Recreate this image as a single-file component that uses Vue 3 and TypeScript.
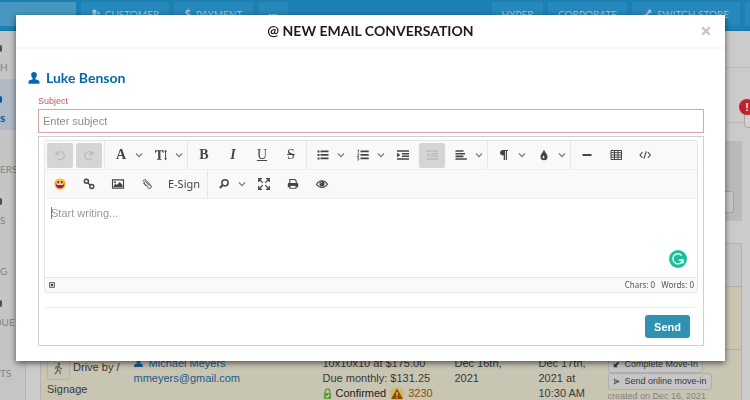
<script setup lang="ts">
import { ref } from 'vue'

interface Tool {
  id: string
  label: string
  glyph?: string
  menu?: boolean
  disabled?: boolean
}

const subject = ref('')
const message = ref('')

const firstRow: Tool[][] = [
  [
    { id: 'undo', label: 'Undo', disabled: true },
    { id: 'redo', label: 'Redo', disabled: true },
  ],
  [
    { id: 'font', label: 'Font', glyph: 'A', menu: true },
    { id: 'size', label: 'Font size', menu: true },
  ],
  [
    { id: 'bold', label: 'Bold', glyph: 'B' },
    { id: 'italic', label: 'Italic', glyph: 'I' },
    { id: 'underline', label: 'Underline', glyph: 'U' },
    { id: 'strike', label: 'Strikethrough', glyph: 'S' },
  ],
  [
    { id: 'ul', label: 'Bulleted list', menu: true },
    { id: 'ol', label: 'Numbered list', menu: true },
    { id: 'indent', label: 'Indent' },
    { id: 'outdent', label: 'Outdent', disabled: true },
    { id: 'align', label: 'Align', menu: true },
  ],
  [
    { id: 'paragraph', label: 'Paragraph', menu: true },
    { id: 'colour', label: 'Colour', menu: true },
  ],
  [
    { id: 'rule', label: 'Horizontal line' },
    { id: 'table', label: 'Table' },
    { id: 'code', label: 'Source' },
  ],
]

const secondRow: Tool[][] = [
  [
    { id: 'emoji', label: 'Emoji' },
    { id: 'link', label: 'Link' },
    { id: 'image', label: 'Image' },
    { id: 'clip', label: 'Attach file' },
    { id: 'esign', label: 'E-Sign', glyph: 'E-Sign' },
  ],
  [
    { id: 'find', label: 'Find', menu: true },
    { id: 'full', label: 'Full size' },
    { id: 'print', label: 'Print' },
    { id: 'preview', label: 'Preview' },
  ],
]

const rows = [firstRow, secondRow]

const icons: Record<string, string> = {
  undo: '<path d="M4.300 4v3.400h3.400M4.600 7.200A4 4 0 1 1 5.600 11.600" fill="none" stroke="currentColor" stroke-width="1.400"/>',
  redo: '<path d="M11.700 4v3.400H8.300M11.400 7.200A4 4 0 1 0 10.400 11.600" fill="none" stroke="currentColor" stroke-width="1.400"/>',
  size: '<path d="M2 3.200h8.600v2.700H10c-.2-1.200-.6-1.700-1.700-1.700h-.9v7.100c0 .6.400.8 1.300.9v.6H3.900v-.6c.9-.1 1.300-.3 1.300-.9V4.200h-.9c-1 0-1.500.5-1.700 1.700H2z"/><path d="M12.600 2.800l1.500 2h-1v6.400h1l-1.500 2-1.500-2h1V4.800h-1z"/>',
  ul: '<path d="M2.500 3.500h2v2h-2zM2.500 7h2v2h-2zM2.500 10.500h2v2h-2zM5.500 3.500h8v1.700h-8zM5.500 7h8v1.700h-8zM5.500 10.500h8v1.700h-8z"/>',
  ol: '<path d="M5.500 3.500h8.200v1.700H5.500zM5.500 7h8.200v1.700H5.500zM5.500 10.500h8.200v1.700H5.500z"/><path d="M2.600 3.500l.9-.6v3M2.300 7h1.500v1l-1.500 1.500h1.700M2.300 10.800h1.500l-.8.9c1.300 0 1.200 1.700-.8 1.300" fill="none" stroke="currentColor" stroke-width=".8"/>',
  indent: '<path d="M2 3.200h12v1.500H2zM7 5.900h7v1.500H7zM7 8.600h7v1.500H7zM2 11.300h12v1.500H2zM2 5.700l3.500 2.300L2 10.300z"/>',
  outdent: '<path d="M2 3.200h12v1.500H2zM7 5.900h7v1.500H7zM7 8.600h7v1.500H7zM2 11.300h12v1.500H2zM5.500 5.700L2 8l3.500 2.300z"/>',
  align: '<path d="M2.500 3.200h8v1.600h-8zM2.500 5.900H12v1.600H2.500zM2.500 8.600h8v1.600h-8zM2.500 11.300h11.300v1.500H2.500z"/>',
  paragraph: '<path d="M7 3h5v1.100h-1V13H9.800V4.100H9V13H7.700V8.600C5.400 8.500 4 7.500 4 5.800S5.300 3 7 3z"/>',
  colour: '<path d="M8 2.500c.5 2.200 3.500 4.700 3.500 7.300A3.500 3.500 0 0 1 8 13.300a3.500 3.500 0 0 1-3.500-3.500C4.500 7.200 7.500 4.700 8 2.500z"/><path d="M7.500 8.300c-.2 1-.9 1.500-.9 2.200a1 1 0 0 0 1.900.1c.1-.8-.8-1.200-1-2.300z" fill="#fff"/>',
  rule: '<path d="M3.500 7h9v2h-9z"/>',
  table: '<path d="M3 3.500h10.500v9H3zM3 5.700h10.500M3 8h10.500M3 10.200h10.500M6.500 4v8.500M10 4v8.500" fill="none" stroke="currentColor"/>',
  code: '<path d="M5.500 5L3 8l2.500 3M10.800 5l2.500 3-2.500 3M9.300 4.300L7 11.700" fill="none" stroke="currentColor" stroke-width="1.100"/>',
  emoji: '<circle cx="8" cy="8" r="5.600" fill="#f9a825"/><ellipse cx="8" cy="5.300" rx="3.800" ry="2.300" fill="#ffc233"/><circle cx="6.200" cy="5.900" r="1" fill="#3c2b2b"/><circle cx="9.800" cy="5.900" r="1" fill="#3c2b2b"/><path d="M4 8.200h8c0 2.700-1.500 4.100-4 4.100s-4-1.400-4-4.100z" fill="#a0174c"/><path d="M5 8.200h6v.8H5z" fill="#fff"/>',
  link: '<g fill="none" stroke="currentColor" stroke-width="1.500"><circle cx="5.400" cy="5.300" r="2"/><circle cx="10.700" cy="10.600" r="2"/><path d="M6.800 6.700l2.500 2.500"/></g>',
  image: '<path d="M2.500 3.900h11v8.200h-11z" fill="none" stroke="currentColor" stroke-width="1.100"/><circle cx="5" cy="6.200" r="1"/><path d="M3.700 11V9.500l1.900-1.800 1.300 1.200 2.700-2.800 2.800 2.700V11z"/>',
  clip: '<path d="M4 5.400c.5-2 2.200-2.200 3.400-.9l4.200 4.700c1 1.300.8 2.400 0 3-.8.500-1.800.3-2.600-.6L5.500 7.700c-.7-.8-.5-1.500 0-1.900.5-.4 1.100-.2 1.600.4l3.300 3.700M7.300 9.900L4.500 6.800" fill="none" stroke="currentColor"/>',
  find: '<circle cx="9" cy="6.800" r="3.100" fill="none" stroke="currentColor" stroke-width="1.500"/><path d="M7 8.800L3.900 12" stroke="currentColor" stroke-width="2"/>',
  full: '<path d="M2.700 6V2.700H6M10 2.700h3.300V6M13.300 10v3.300H10M6 13.300H2.700V10M3 3l3.800 3.800M13 3L9.200 6.800M13 13L9.200 9.200M3 13l3.800-3.800" fill="none" stroke="currentColor" stroke-width="1.200"/>',
  print: '<path d="M4.800 7.200V3.500h5l1.400 1.400v2.300" fill="none" stroke="currentColor" stroke-width="1.100"/><path d="M4 7h8c.8 0 1.200.4 1.200 1.200v3h-1.700v1.600h-7v-1.600H2.800v-3C2.800 7.400 3.200 7 4 7z"/><path d="M5.500 9.900h5v1.900h-5z" fill="#fff"/>',
  preview: '<path d="M2.500 8.200c3-4.600 8-4.600 11 0-3 4.200-8 4.200-11 0z" fill="none" stroke="currentColor" stroke-width="1.100"/><circle cx="8" cy="7.700" r="2.600"/><path d="M6.600 7.500A1.500 1.500 0 0 1 8 6.200" fill="none" stroke="#fff" stroke-width=".7"/>',
}

const sideItems = [
  { text: 'H', mark: true, active: false, long: false },
  { text: 's', mark: true, active: true, long: false },
  { text: 'ERS', mark: false, active: false, long: false },
  { text: 'S', mark: true, active: false, long: false },
  { text: 'G', mark: false, active: false, long: false },
  { text: 'DUE', mark: true, active: false, long: true },
  { text: 'RTS', mark: false, active: false, long: true },
]
</script>

<template>
  <div class="page">
    <header class="topbar">
      <div class="search"></div>
      <a class="nav customer" href="#">
        <svg class="nav-icon" viewBox="0 0 12 12"><circle cx="4.500" cy="3.500" r="3" /><path d="M0 11c0-3 2-4.500 4.500-4.500S9 8 9 11zM8 5h1.500V3.500h1V5H12v1.200h-1.500v1.500h-1V6.200H8z" /></svg>
        <span>CUSTOMER</span>
      </a>
      <a class="nav payment" href="#"><b>$</b><span>PAYMENT</span></a>
      <a class="nav more" href="#"><b>···</b></a>
      <span class="spacer"></span>
      <a class="nav hyper" href="#">HYPER</a>
      <a class="nav corporate" href="#">CORPORATE</a>
      <a class="nav switch" href="#">
        <svg class="nav-icon" viewBox="0 0 12 12"><path d="M6 1h5v5L9.500 4.500l-5 5L6 11H1V6l1.500 1.500 5-5z" /></svg>
        <span>SWITCH STORE</span>
      </a>
      <span class="nav edge"></span>
    </header>

    <div class="shell">
      <nav class="side">
        <a
          v-for="item in sideItems"
          :key="item.text"
          href="#"
          :class="{ active: item.active, long: item.long }"
        >
          <i v-if="item.mark"></i><span>{{ item.text }}</span>
        </a>
      </nav>
      <main class="content">
        <div class="band first"></div>
        <div class="band second"><span class="alert-box"></span><span class="alert">!</span></div>
        <div class="panel"><span class="stub"></span></div>
        <table class="leads">
          <colgroup>
            <col class="c1" /><col class="c2" /><col class="c3" /><col class="c4" /><col class="c5" /><col />
          </colgroup>
          <thead><tr><th colspan="6"></th></tr></thead>
          <tbody>
            <tr class="blank"><td colspan="6"></td></tr>
            <tr>
              <td class="source">
                <span class="walk"><svg viewBox="0 0 16 16"><circle cx="8.500" cy="2.500" r="1.700" /><path d="M8 5L6.500 9.500 9.500 11l1 4M7 9l-1 3-2.500 3M4 8.500l1.200-2.700L8 5l2 2.500 2.500 1" fill="none" stroke="currentColor" stroke-width="1.700" /></svg></span>
                Drive by / Signage
              </td>
              <td class="contact">
                <a href="#"><svg class="person" viewBox="0 0 12 12"><circle cx="6" cy="3.500" r="3" /><path d="M0 12c0-4 2-5 6-5s6 1 6 5z" /></svg> Michael Meyers</a>
                <a href="#">mmeyers@gmail.com</a>
              </td>
              <td class="unit">
                <div>10x10x10 at $175.00</div>
                <div>Due monthly: $131.25</div>
                <div class="status">
                  <svg class="lock" viewBox="0 0 10 12"><path d="M2.500 6V3.500a2.500 2.500 0 0 1 5 0V6" fill="none" stroke="currentColor" stroke-width="1.400" /><path d="M1 5.500h8V12H1z" /><path d="M3 8.700l1.500 1.500 2.700-2.900" fill="none" stroke="#fff" stroke-width="1.100" /></svg>
                  <b>Confirmed</b>
                  <svg class="warn" viewBox="0 0 14 14"><circle cx="7" cy="7" r="7" fill="#d3b95e" /><path d="M7 1.500L13 12H1z" fill="#8a4d0c" /><path d="M7 5v4M7 10v1.200" stroke="#ddc77c" stroke-width="1.300" /></svg>
                  <em>3230</em>
                </div>
              </td>
              <td class="date">Dec 16th, 2021</td>
              <td class="date">Dec 17th, 2021 at 10:30 AM</td>
              <td class="actions">
                <button type="button"><svg viewBox="0 0 10 10"><path d="M1 9V3l2 2 4-4 2 2-4 4 2 2z" /></svg>Complete Move-In</button>
                <button type="button"><svg viewBox="0 0 10 10"><path d="M1.500 1.500L9 5 1.500 8.500l1.300-3.500zM3 5h5" fill="none" stroke="currentColor" /></svg>Send online move-in</button>
                <small>created on Dec 16, 2021</small>
              </td>
            </tr>
          </tbody>
        </table>
      </main>
    </div>

    <div class="overlay">
      <section class="modal" role="dialog" aria-labelledby="modal-title">
        <div class="modal-head">
          <h1 id="modal-title">@ NEW EMAIL CONVERSATION</h1>
          <button class="close" type="button" aria-label="Close">
            <svg viewBox="0 0 10 10"><path d="M1.200 1.200l7.600 7.600M8.800 1.200L1.200 8.800" stroke="currentColor" stroke-width="2.300" /></svg>
          </button>
        </div>
        <form class="modal-body" @submit.prevent>
          <h2>
            <svg viewBox="0 0 12 13"><path d="M6 0a3 3 0 0 1 3 3.200c0 1.600-.6 2.700-1.500 3.400v1.200l3 1.100c1 .4 1.500 1.100 1.500 2.100v1c0 .3-.2.600-.6.600H.6c-.4 0-.6-.3-.6-.6v-1c0-1 .5-1.700 1.500-2.100l3-1.100V6.600C3.600 5.900 3 4.800 3 3.200A3 3 0 0 1 6 0z" /></svg>
            Luke Benson
          </h2>
          <div class="fields">
            <label for="subject">Subject</label>
            <input id="subject" v-model="subject" type="text" placeholder="Enter subject" />
            <div class="compose">
              <div class="editor">
                <div v-for="(row, r) in rows" :key="r" class="tools">
                  <div v-for="(group, g) in row" :key="g" class="group">
                    <button
                      v-for="tool in group"
                      :key="tool.id"
                      type="button"
                      :class="[tool.id, { menu: tool.menu }]"
                      :disabled="tool.disabled"
                      :aria-label="tool.label"
                    >
                      <span v-if="tool.glyph" class="glyph">{{ tool.glyph }}</span>
                      <svg v-else class="icon" viewBox="0 0 16 16" v-html="icons[tool.id]"></svg>
                      <svg v-if="tool.menu" class="chevron" viewBox="0 0 10 10"><path d="M2 3.500l3 3.200 3-3.200" /></svg>
                    </button>
                  </div>
                </div>
                <div class="writing">
                  <textarea v-model="message" aria-label="Message" placeholder="Start writing..."></textarea>
                  <span class="caret"></span>
                  <svg class="grammar" viewBox="0 0 18 18"><circle cx="9" cy="9" r="9" fill="#15c39a" /><path d="M12.600 5.400A5 5 0 1 0 13.800 10M9.800 10h4.200v3.600" fill="none" stroke="#fff" stroke-width="1.400" /></svg>
                </div>
                <div class="statusbar">
                  <svg viewBox="0 0 6 6"><path d="M.5 .5h5v5h-5z" fill="#ccc" stroke="#777" /><path d="M2 2h2v2H2z" fill="#444" /></svg>
                  <span>Chars: 0</span><span>Words: 0</span>
                </div>
              </div>
              <div class="submit"><button type="submit">Send</button></div>
            </div>
          </div>
        </form>
      </section>
    </div>
  </div>
</template>

<style>
body {
  margin: 0;
}
</style>

<style scoped>
* {
  box-sizing: border-box;
}
.page {
  height: 100vh;
  overflow: hidden;
  background: #cbcbcb;
  color: #38383a;
  font: 11px/15px "Liberation Sans", Arial, sans-serif;
}
a {
  color: inherit;
  text-decoration: none;
}
button {
  font: inherit;
  color: inherit;
  margin: 0;
  padding: 0;
  border: 0;
  background: none;
}
svg {
  fill: currentColor;
}

/* Top bar */
.topbar {
  display: flex;
  gap: 5px;
  height: 31px;
  padding-top: 2px;
  background: #1c80b3;
  border-bottom: 1px solid #17739f;
}
.search {
  width: 76px;
  height: 24px;
  background: #4797c1;
}
.nav {
  display: flex;
  align-items: center;
  justify-content: center;
  gap: 5px;
  height: 23px;
  background: #2688bb;
  color: #9cc6de;
  font: 10px/14px Lato, sans-serif;
}
.nav b {
  font-size: 11px;
  font-weight: 700;
}
.nav-icon {
  width: 9px;
  height: 9px;
}
.customer {
  width: 88px;
}
.payment {
  width: 79px;
}
.more {
  width: 30px;
}
.spacer {
  flex: 1;
}
.hyper {
  width: 51px;
}
.corporate {
  width: 79px;
}
.switch {
  width: 108px;
}
.edge {
  width: 5px;
}

/* Page behind the dialog */
.shell {
  display: flex;
}
.side {
  width: 26px;
  flex: none;
  border-right: 1px solid #b4b4b4;
  background: #c5c5c5;
  color: #838383;
  font: 10px/14px Lato, sans-serif;
}
.side a {
  display: flex;
  flex-direction: column;
  justify-content: flex-end;
  gap: 8px;
  height: 51px;
  padding-bottom: 5px;
}
.side a:first-child {
  height: 48px;
}
.side i {
  width: 2px;
  height: 7px;
  border-radius: 0 4px 4px 0;
  background: #4e4e4e;
}
.side .long span {
  margin-left: -6px;
}
.side .active {
  background: #b0bac6;
  color: #0c5a92;
  font-size: 12px;
  font-weight: 700;
}
.side .active i {
  background: #0c5a92;
}
.content {
  flex: 1;
  min-width: 0;
  padding-left: 14px;
}
.band {
  border-bottom: 1px solid #bababa;
}
.first {
  height: 37px;
}
.second {
  position: relative;
  height: 55px;
  margin-bottom: 18px;
}
.alert {
  position: absolute;
  right: -5px;
  bottom: 7px;
  width: 16px;
  height: 16px;
  border-radius: 50%;
  background: #c3202a;
  color: #eee;
  font-weight: 700;
  line-height: 16px;
  text-align: center;
}
.alert-box {
  position: absolute;
  right: -10px;
  bottom: -6px;
  width: 16px;
  height: 20px;
  border: 1px solid #a6a6a6;
  border-radius: 4px;
  background: #d0d0d0;
}
.panel {
  display: flex;
  justify-content: flex-end;
  align-items: flex-end;
  height: 80px;
  margin: 0 8px 22px 0;
  padding: 8px;
  background: #bababa;
}
.stub {
  width: 60px;
  height: 22px;
  border: 1px solid #a4a4a4;
  border-radius: 3px;
  background: #c6c6c6;
}
.leads {
  width: calc(100% - 8px);
  table-layout: fixed;
  border-collapse: collapse;
  background: #c9c5b3;
  border: 1px solid #b3b3b0;
}
.c1 {
  width: 87px;
}
.c2 {
  width: 189px;
}
.c3 {
  width: 132px;
}
.c4 {
  width: 84px;
}
.c5 {
  width: 69px;
}
.leads th {
  height: 43px;
  padding: 0;
  background: #c4c4c4;
}
.leads td {
  padding: 6px 0 0 6px;
  vertical-align: top;
  border-top: 1px solid #b0aea4;
}
.leads .blank td {
  height: 63px;
  padding: 0;
}
.leads .source {
  padding-top: 7px;
  line-height: 19px;
}
.leads .date {
  padding-right: 14px;
}
.walk {
  display: inline-flex;
  width: 23px;
  height: 23px;
  align-items: center;
  justify-content: center;
  border: 1px solid #b5b2a5;
  border-radius: 3px;
  color: #6d6c68;
  vertical-align: middle;
}
.walk svg {
  width: 13px;
  height: 13px;
}
.contact a {
  display: block;
  color: #175c8f;
}
.person {
  width: 9px;
  height: 9px;
  margin-right: 3px;
}
.status {
  display: flex;
  align-items: center;
  gap: 4px;
}
.status b {
  color: #222;
  font-weight: 400;
}
.status em {
  color: #8a4d0c;
  font-style: normal;
}
.lock {
  width: 9px;
  height: 11px;
  color: #5c9c33;
}
.warn {
  width: 14px;
  height: 14px;
}
.actions button {
  display: flex;
  align-items: center;
  gap: 5px;
  height: 17px;
  padding: 0 4px;
  border: 1px solid #aeaeae;
  border-radius: 3px;
  background: #c6c6c6;
  font-size: 9px;
}
.actions svg {
  width: 7px;
  height: 7px;
}
.actions small {
  display: block;
  color: #85837c;
  font-size: 9px;
  line-height: 12px;
}

/* Dialog */
.overlay {
  position: fixed;
  inset: 0;
  padding: 15px 25px 0 16px;
}
.modal {
  background: #fff;
  box-shadow: 0 2px 6px rgba(0, 0, 0, 0.6);
}
.modal-head {
  display: grid;
  grid-template-columns: 20px 1fr 20px;
  align-items: center;
  height: 34px;
  padding: 0 9px;
  border-bottom: 2px solid #f7f7f7;
}
.modal-head h1 {
  grid-column: 2;
  margin: 0;
  color: #1f1a20;
  font: 700 14px/18px Lato, sans-serif;
  text-align: center;
}
.close {
  display: flex;
  justify-content: center;
  color: #c6c6c6;
}
.close svg {
  width: 10px;
  height: 10px;
}
.modal-body {
  padding: 20px 21px 15px 12px;
}
.modal-body h2 {
  display: flex;
  align-items: center;
  gap: 6px;
  margin: 0;
  color: #0668ae;
  font: 700 14px/18px Lato, sans-serif;
}
.modal-body h2 svg {
  width: 12px;
  height: 12px;
}
.fields {
  padding: 8px 0 0 10px;
}
.fields label {
  display: block;
  color: #c65a5a;
  font-size: 9px;
  line-height: 12px;
}
.fields > input {
  display: block;
  width: 100%;
  height: 24px;
  margin: 2px 0 3px;
  padding: 0 4px;
  border: 1px solid #dfa3a3;
  border-radius: 0;
  background: #fff;
  outline: 0;
  font: 11px/16px "Liberation Sans", Arial, sans-serif;
}
.fields > input::placeholder {
  color: #8c8c8c;
}
.compose {
  padding: 3px 5px 7px;
  border: 1px solid #cfcfcf;
}
.editor {
  border: 1px solid #e6e6e6;
  border-radius: 3px;
  background: #f9f9f9;
}
.tools {
  display: flex;
  height: 29px;
  border-bottom: 1px solid #eee;
}
.group {
  display: flex;
  align-items: center;
  gap: 3px;
  padding: 0 2px 0 3px;
  border-right: 1px solid #e6e6e6;
}
.group:first-child {
  padding-left: 2px;
}
.group:last-child {
  border-right: 0;
}
.group button {
  display: flex;
  align-items: center;
  justify-content: center;
  width: 26px;
  height: 25px;
  color: #454545;
}
.group .menu {
  width: 37px;
}
.group button:disabled {
  border-radius: 2px;
  background: #d5d5d5;
  color: #bcbcbc;
}
.icon {
  width: 16px;
  height: 16px;
}
.menu .icon,
.menu .glyph {
  margin-left: 5px;
}
.chevron {
  width: 10px;
  height: 10px;
  margin: 0 1px 0 auto;
}
.chevron path {
  fill: none;
  stroke: #777;
  stroke-width: 1.1;
}
.glyph {
  width: 16px;
  font: 700 14px/16px "Liberation Serif", serif;
  text-align: center;
}
.italic .glyph {
  font-style: italic;
}
.underline .glyph {
  font-weight: 400;
  text-decoration: underline;
}
.strike .glyph {
  font-weight: 400;
  text-decoration: line-through;
}
.group .esign {
  width: 42px;
}
.esign .glyph {
  width: auto;
  font: 11px/16px "Noto Sans", sans-serif;
}
.writing {
  position: relative;
  background: #fff;
}
.writing textarea {
  display: block;
  width: 100%;
  height: 78px;
  padding: 6px;
  border: 0;
  outline: 0;
  resize: none;
  background: none;
  font: 11px/16px "Liberation Sans", Arial, sans-serif;
}
.writing textarea::placeholder {
  color: #999;
}
.caret {
  position: absolute;
  top: 8px;
  left: 6px;
  width: 1px;
  height: 12px;
  background: #777;
}
.grammar {
  position: absolute;
  right: 10px;
  bottom: 9px;
  width: 18px;
  height: 18px;
}
.statusbar {
  display: flex;
  align-items: center;
  gap: 6px;
  height: 15px;
  padding: 0 3px;
  border-top: 1px solid #e6e6e6;
  color: #555;
  font: 8px/12px "Noto Sans", sans-serif;
}
.statusbar svg {
  width: 6px;
  height: 6px;
  margin: 0 auto 0 1px;
}
.submit {
  display: flex;
  justify-content: flex-end;
  margin-top: 14px;
  padding: 7px 8px 0;
  border-top: 1px solid #eee;
}
.submit button {
  width: 45px;
  height: 23px;
  border-radius: 3px;
  background: #2f92b3;
  color: #fff;
  font: 700 11px/16px "Liberation Sans", Arial, sans-serif;
}
</style>
